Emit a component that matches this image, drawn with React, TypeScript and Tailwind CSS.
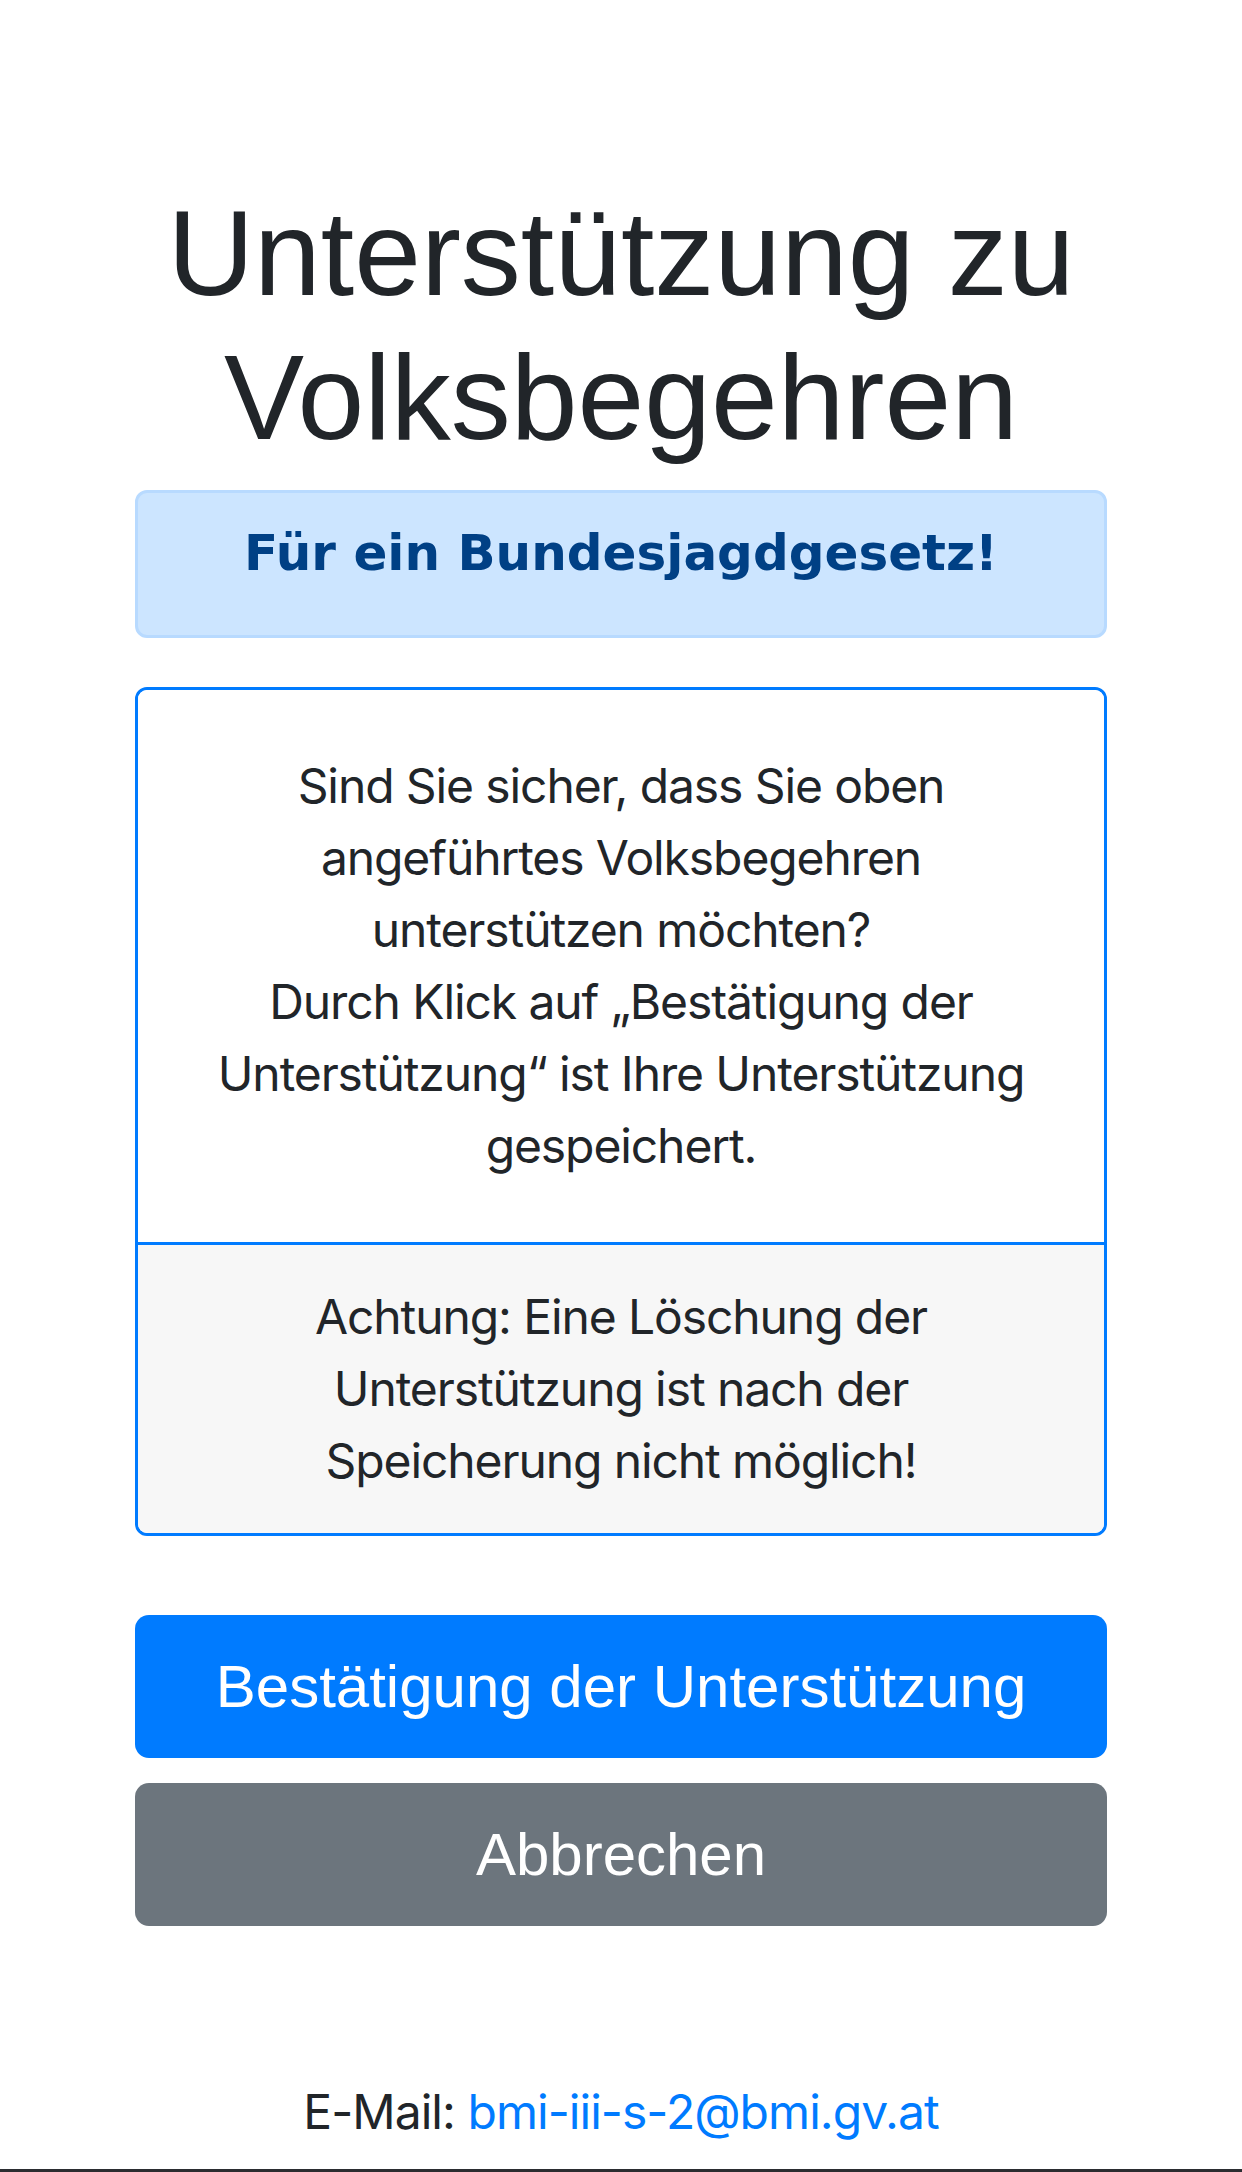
import React from "react";

const sans = { fontFamily: '"Liberation Sans", Arial, sans-serif' };

export default function App() {
  return (
    <div className="min-h-[2172px] flex flex-col bg-white text-[#212529]">
      <main className="px-[135px] pt-[181px] flex flex-col">
        <h1
          className="text-center text-[120px] leading-[144px] font-normal mb-[21px] font-['Liberation_Sans',Arial,sans-serif]"
        >
          Unterstützung zu
          <br />
          Volksbegehren
        </h1>

        <div className="border-[3px] border-[#b8daff] bg-[#cce5ff] rounded-[12px] pt-[30px] pb-[52px] text-center">
          <h4 className="text-[50px] leading-[60px] font-bold text-[#004085] font-['DejaVu_Sans',Verdana,sans-serif]">
            Für ein Bundesjagdgesetz!
          </h4>
        </div>

        <div className="mt-[49px] border-[3px] border-[#007bff] rounded-[12px] overflow-hidden font-['Inter',sans-serif] text-[48px] leading-[72px] tracking-[-1.1px] text-center">
          <div className="px-[57px] py-[60px] bg-white">
            <p>
              Sind Sie sicher, dass Sie oben
              <br />
              angeführtes Volksbegehren
              <br />
              unterstützen möchten?
              <br />
              Durch Klick auf „Bestätigung der
              <br />
              Unterstützung“ ist Ihre Unterstützung
              <br />
              gespeichert.
            </p>
          </div>
          <div className="border-t-[3px] border-[#007bff] bg-[#f7f7f7] px-[57px] py-[36px]">
            <p>
              Achtung: Eine Löschung der
              <br />
              Unterstützung ist nach der
              <br />
              Speicherung nicht möglich!
            </p>
          </div>
        </div>

        <div className="mt-[79px] flex flex-col gap-[25px]">
          <button
            className="w-full h-[143px] rounded-[14px] bg-[#007bff] text-white text-[60px] leading-[90px]"
            style={sans}
          >
            Bestätigung der Unterstützung
          </button>
          <button
            className="w-full h-[143px] rounded-[14px] bg-[#6c757d] text-white text-[60px] leading-[90px]"
            style={sans}
          >
            Abbrechen
          </button>
        </div>

        <p className="mt-[150px] text-center text-[48px] leading-[72px] tracking-[-0.95px] font-['Inter',sans-serif]">
          E-Mail: <a className="text-[#007bff]" href="#">bmi-iii-s-2@bmi.gv.at</a>
        </p>
      </main>
      <div className="mt-auto h-[3px] bg-[#2b2d31]" />
    </div>
  );
}
